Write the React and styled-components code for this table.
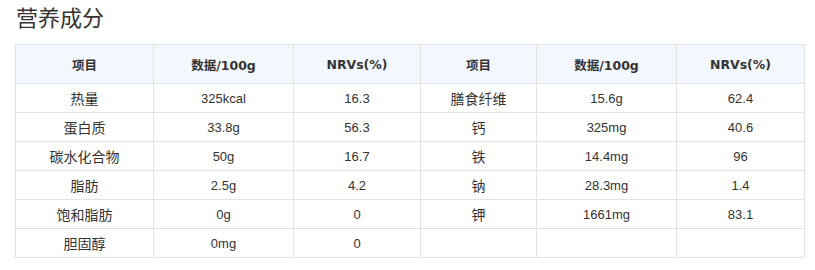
import React from 'react'
import styled, { createGlobalStyle } from 'styled-components'

const GlobalStyle = createGlobalStyle`
body {
    margin: 0;
    background: #fff;
    font-family: "Liberation Sans", "Noto Sans CJK SC", sans-serif;
    color: #333;
}
`

const left = [
    ['热量', '325kcal', '16.3'],
    ['蛋白质', '33.8g', '56.3'],
    ['碳水化合物', '50g', '16.7'],
    ['脂肪', '2.5g', '4.2'],
    ['饱和脂肪', '0g', '0'],
    ['胆固醇', '0mg', '0'],
]

const right = [
    ['膳食纤维', '15.6g', '62.4'],
    ['钙', '325mg', '40.6'],
    ['铁', '14.4mg', '96'],
    ['钠', '28.3mg', '1.4'],
    ['钾', '1661mg', '83.1'],
    ['', '', ''],
]

const heads = ['项目', '数据/100g', 'NRVs(%)', '项目', '数据/100g', 'NRVs(%)']
const widths = [138, 140, 127, 116, 140, 128]

export default function App() {
    return (
        <Page>
            <GlobalStyle />
            <Title>营养成分</Title>
            <Table>
                <colgroup>
                    {widths.map((w, i) => <col key={i} style={{ width: w }} />)}
                </colgroup>
                <thead>
                    <tr>
                        {heads.map((h, i) => <Th key={i}>{h}</Th>)}
                    </tr>
                </thead>
                <tbody>
                    {left.map((row, i) => (
                        <tr key={i}>
                            {row.concat(right[i]).map((c, j) => (
                                <Td key={j} $name={j % 3 === 0}>{c}</Td>
                            ))}
                        </tr>
                    ))}
                </tbody>
            </Table>
        </Page>
    )
}

const Page = styled.div`
padding: 0 15px;
`

const Title = styled.h2`
margin: 0;
padding-left: 1px;
font-family: "Noto Sans CJK SC", sans-serif;
font-size: 22px;
font-weight: 400;
line-height: 32px;
color: #333;
`

const Table = styled.table`
margin-top: 12px;
width: 790px;
table-layout: fixed;
border-collapse: collapse;
border: 1px solid #e3e3e3;
font-size: 13px;
`

const Th = styled.th`
height: 38px;
padding: 0;
background: #f3f8ff;
border: 1px solid #e3e3e3;
font-family: "DejaVu Sans", "Noto Sans CJK SC", sans-serif;
font-size: 12.5px;
font-weight: bold;
text-align: center;
color: #333;
`

const Td = styled.td`
height: 28px;
padding: 0;
border: 1px solid #e3e3e3;
font-size: ${p => (p.$name ? '14px' : '13px')};
text-align: center;
color: #333;
`
